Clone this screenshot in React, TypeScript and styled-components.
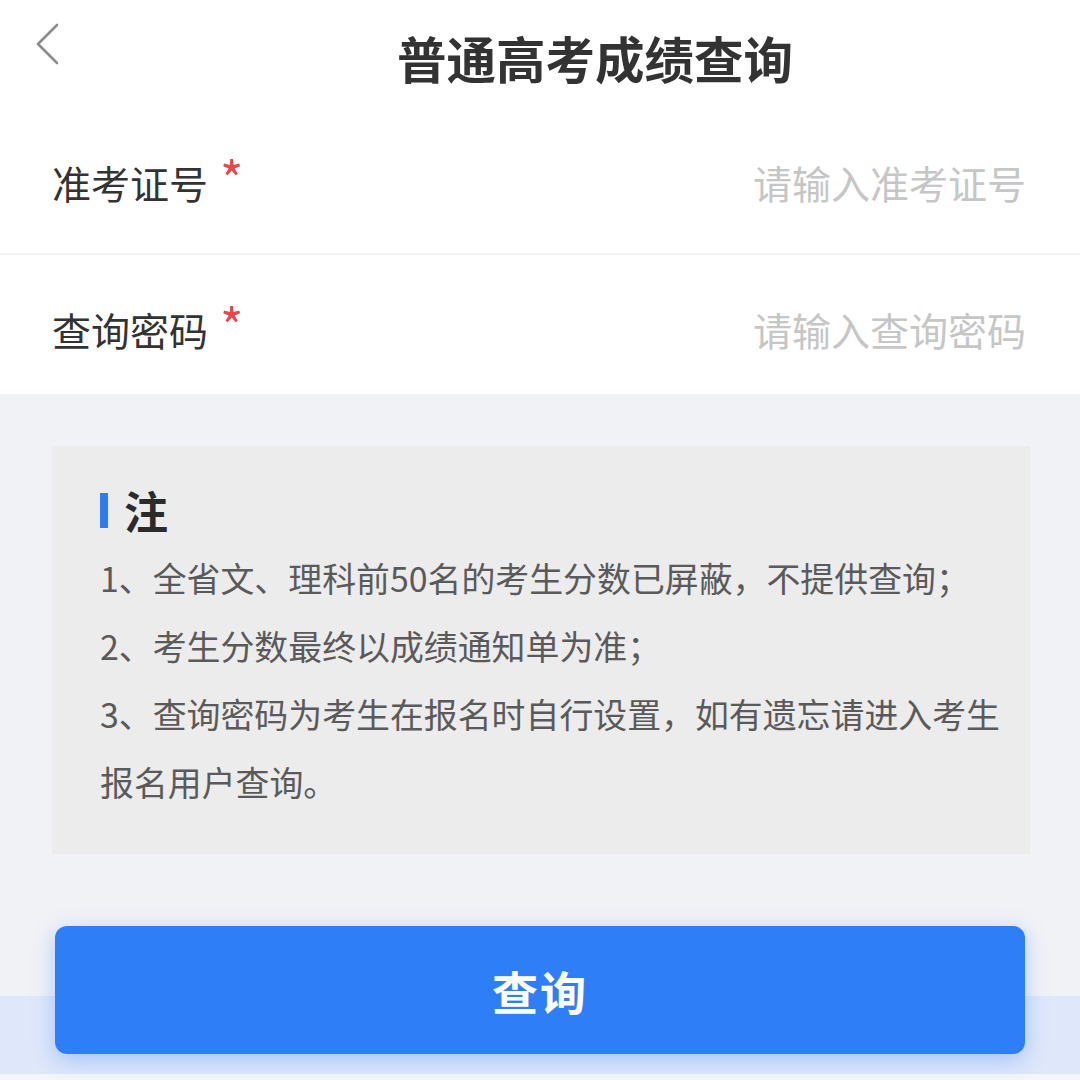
import styled, { createGlobalStyle } from "styled-components"

const GlobalStyle = createGlobalStyle`
html, body {
    margin: 0;
    padding: 0;
    background: #f1f2f6;
}
body {
    font-family: "Noto Sans CJK SC", "Noto Sans", sans-serif;
}
`

const fields = [
    { label: "准考证号", placeholder: "请输入准考证号" },
    { label: "查询密码", placeholder: "请输入查询密码" },
]

const notes = [
    "1、全省文、理科前50名的考生分数已屏蔽，不提供查询；",
    "2、考生分数最终以成绩通知单为准；",
    "3、查询密码为考生在报名时自行设置，如有遗忘请进入考生报名用户查询。",
]

const App = () => {
    return (
        <Page>
            <GlobalStyle />
            <Header>
                <BackButton aria-label="返回">
                    <svg width="26" height="42" viewBox="0 0 26 42">
                        <polyline points="21,2 2,21 21,40" fill="none" stroke="#8c8c8c" strokeWidth="2.6" strokeLinecap="round" strokeLinejoin="round" />
                    </svg>
                </BackButton>
                <Title>普通高考成绩查询</Title>
            </Header>
            <Form>
                {fields.map((f, i) => (
                    <Row key={f.label} $first={i === 0}>
                        <Label>
                            {f.label}
                            <Star>*</Star>
                        </Label>
                        <Input placeholder={f.placeholder} />
                    </Row>
                ))}
            </Form>
            <NoteWrap>
                <NoteBox>
                    <NoteTitle>注</NoteTitle>
                    {notes.map((n) => (
                        <NoteLine key={n}>{n}</NoteLine>
                    ))}
                </NoteBox>
            </NoteWrap>
            <Bottom>
                <QueryButton>查询</QueryButton>
            </Bottom>
        </Page>
    )
}

const Page = styled.div`
width: 1080px;
height: 1080px;
overflow: hidden;
background: #f1f2f6;
display: flex;
flex-direction: column;
`

const Header = styled.header`
height: 116px;
background: #fff;
display: flex;
align-items: flex-start;
padding-left: 36px;
box-sizing: border-box;
`

const BackButton = styled.div`
margin-top: 23px;
width: 26px;
height: 42px;
`

const Title = styled.h1`
margin: 30px 0 0 335px;
font-size: 49.5px;
line-height: 56px;
font-weight: 700;
color: #333;
letter-spacing: 0;
`

const Form = styled.div`
background: #fff;
display: flex;
flex-direction: column;
`

const Row = styled.div<{ $first?: boolean }>`
height: ${(p) => (p.$first ? "137px" : "141px")};
display: flex;
align-items: center;
justify-content: space-between;
padding: ${(p) => (p.$first ? "0 54px 6px 52px" : "8px 54px 0 52px")};
box-sizing: border-box;
border-top: ${(p) => (p.$first ? "none" : "2px solid #f3f3f3")};
`

const Label = styled.div`
font-size: 39px;
line-height: 44px;
color: #333;
display: flex;
align-items: flex-start;
`

const Star = styled.span`
color: #e5474d;
font-size: 50px;
line-height: 50px;
margin-left: 12px;
margin-top: -8px;
`

const Input = styled.input`
border: none;
outline: none;
background: transparent;
text-align: right;
font-family: inherit;
font-size: 39px;
width: 420px;
padding: 0;
color: #333;
&::placeholder {
    color: #c6c6c6;
}
`

const NoteWrap = styled.div`
padding: 52px 50px 0 52px;
`

const NoteBox = styled.div`
background: #ececec;
height: 408px;
box-sizing: border-box;
padding: 38px 14px 0 48px;
`

const NoteTitle = styled.div`
display: flex;
align-items: center;
font-size: 44px;
line-height: 52px;
font-weight: 700;
color: #2b2b2b;
margin-bottom: 8px;
&::before {
    content: "";
    width: 8px;
    height: 35px;
    background: #2f7cf0;
    margin-right: 16px;
}
`

const NoteLine = styled.p`
margin: 0;
font-size: 33.9px;
line-height: 68px;
color: #5a5a5a;
`

const Bottom = styled.div`
flex: 1;
padding: 72px 55px 0 55px;
background: linear-gradient(
    to bottom,
    transparent 142px,
    #dfe7fa 142px,
    #dfe7fa 220px,
    #f4f6fb 220px
);
`

const QueryButton = styled.button`
width: 100%;
height: 128px;
border: none;
border-radius: 12px;
background: #2e7ff7;
color: #fff;
font-family: inherit;
font-size: 46px;
font-weight: 700;
letter-spacing: 2px;
box-shadow: 0 6px 22px rgba(46, 127, 247, 0.35);
`

export default App
